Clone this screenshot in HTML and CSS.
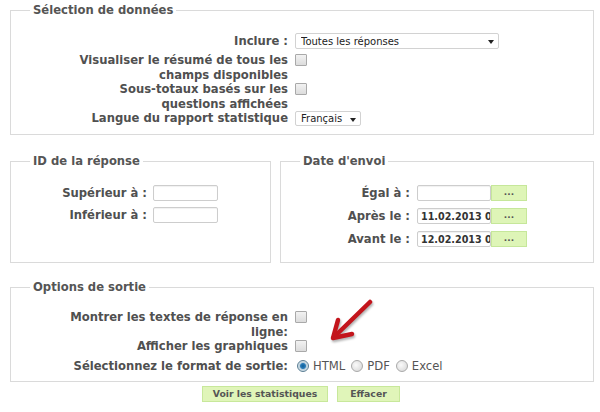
FILE: index.html
```html
<!DOCTYPE html>
<html lang="fr">
<head>
    <meta charset="UTF-8">
    <title>Statistiques</title>
    <link rel="stylesheet" href="styles.css">
</head>
<body>
    <div class="page">
        <fieldset class="box box-data">
            <legend>Sélection de données</legend>
            <div class="form-grid grid-data">
                <label class="lbl row-first">Inclure :</label>
                <div class="ctrl row-first">
                    <span class="select select-wide"><select><option>Toutes les réponses</option></select></span>
                </div>
                <label class="lbl">Visualiser le résumé de tous les champs disponibles</label>
                <div class="ctrl"><input type="checkbox" class="check"></div>
                <label class="lbl">Sous-totaux basés sur les questions affichées</label>
                <div class="ctrl"><input type="checkbox" class="check"></div>
                <label class="lbl">Langue du rapport statistique</label>
                <div class="ctrl">
                    <span class="select select-small"><select><option>Français</option></select></span>
                </div>
            </div>
        </fieldset>

        <div class="filters">
            <fieldset class="box box-id">
                <legend>ID de la réponse</legend>
                <div class="form-grid grid-id">
                    <label class="lbl">Supérieur à :</label>
                    <div class="ctrl"><input type="text" class="field field-id"></div>
                    <label class="lbl">Inférieur à :</label>
                    <div class="ctrl"><input type="text" class="field field-id"></div>
                </div>
            </fieldset>
            <fieldset class="box box-date">
                <legend>Date d'envoi</legend>
                <div class="form-grid grid-date">
                    <label class="lbl">Égal à :</label>
                    <div class="ctrl"><input type="text" class="field field-date"><button type="button" class="pick">...</button></div>
                    <label class="lbl">Après le :</label>
                    <div class="ctrl"><input type="text" class="field field-date" value="11.02.2013 00:00"><button type="button" class="pick">...</button></div>
                    <label class="lbl">Avant le :</label>
                    <div class="ctrl"><input type="text" class="field field-date" value="12.02.2013 00:00"><button type="button" class="pick">...</button></div>
                </div>
            </fieldset>
        </div>

        <fieldset class="box box-output">
            <legend>Options de sortie</legend>
            <div class="form-grid grid-data">
                <label class="lbl">Montrer les textes de réponse en ligne:</label>
                <div class="ctrl"><input type="checkbox" class="check"></div>
                <label class="lbl">Afficher les graphiques</label>
                <div class="ctrl"><input type="checkbox" class="check"></div>
                <label class="lbl row-format">Sélectionnez le format de sortie:</label>
                <div class="ctrl row-format formats">
                    <label class="opt"><input type="radio" name="fmt" class="radio" checked> HTML</label>
                    <label class="opt"><input type="radio" name="fmt" class="radio"> PDF</label>
                    <label class="opt"><input type="radio" name="fmt" class="radio"> Excel</label>
                </div>
            </div>
        </fieldset>

        <div class="actions">
            <button type="button" class="btn btn-show">Voir les statistiques</button>
            <button type="button" class="btn btn-clear">Effacer</button>
        </div>

        <!-- fleche rouge -->
        <svg class="arrow" width="56" height="52" viewBox="0 0 56 52">
            <path d="M46 5 L10 40" />
            <path d="M14 23 L9 41 L28 37" />
        </svg>
    </div>
</body>
</html>
```

FILE: styles.css
```css
* {
    box-sizing: border-box;
}
body {
    margin: 0;
    background-color: white;
    font-family: "DejaVu Sans", Verdana, sans-serif;
    color: #4d4d4d;
}
.page {
    position: relative;
    width: 600px;
    padding: 3px 6px 0 10px;
}
.box {
    margin: 0;
    padding: 0 0 8px 0;
    border: 1px solid #dadada;
    min-width: 0;
}
legend {
    margin-left: 19px;
    padding: 0 3px;
    font-size: 11.6px;
    line-height: 14px;
    font-weight: bold;
    color: #555;
}
.form-grid {
    display: grid;
    align-items: start;
}
.lbl {
    text-align: right;
    font-size: 11.6px;
    line-height: 14.5px;
    font-weight: bold;
    color: #505050;
}
.ctrl {
    display: flex;
    align-items: center;
}

/* selection de donnees */
.grid-data {
    grid-template-columns: 226px 1fr;
    column-gap: 7px;
    padding: 16px 0 0 51px;
}
.row-first {
    margin-bottom: 4px;
}
.box-data .lbl.row-first {
    line-height: 16px;
}
.select {
    position: relative;
    display: inline-block;
}
.select select {
    appearance: none;
    -webkit-appearance: none;
    display: block;
    height: 16px;
    padding: 0 0 0 5px;
    border: 1px solid #d2d2d2;
    border-radius: 2px;
    background: white;
    font-family: "DejaVu Sans", Verdana, sans-serif;
    font-size: 10px;
    color: #222;
}
.select::after {
    content: "";
    position: absolute;
    right: 5px;
    top: 7px;
    border-left: 3px solid transparent;
    border-right: 3px solid transparent;
    border-top: 4px solid #222;
}
.select-wide select {
    width: 204px;
}
.select-small select {
    width: 66px;
    height: 15px;
}
.check {
    appearance: none;
    -webkit-appearance: none;
    margin: 1px 0 0 0;
    width: 12px;
    height: 12px;
    border: 1px solid #a9a9a9;
    border-radius: 1px;
    background: linear-gradient(#f2f2f2, #dcdcdc);
}

/* filtres */
.filters {
    display: flex;
    gap: 9px;
    margin-top: 19px;
}
.box-id {
    flex: 0 0 261px;
}
.box-date {
    flex: 1;
}
.box-id, .box-date {
    padding-bottom: 15px;
}
.grid-id {
    grid-template-columns: 136px auto;
    column-gap: 6px;
    row-gap: 6px;
    padding-top: 17px;
}
.grid-date {
    grid-template-columns: 129px auto;
    column-gap: 7px;
    row-gap: 7px;
    padding-top: 17px;
}
.grid-id .lbl, .grid-date .lbl {
    line-height: 16px;
}
.field {
    height: 16px;
    padding: 0 0 0 3px;
    border: 1px solid #cdcdcd;
    border-radius: 2px;
    box-shadow: inset 0 1px 1px rgba(0, 0, 0, 0.06);
    font-family: "DejaVu Sans", Verdana, sans-serif;
    font-size: 9.6px;
    font-weight: bold;
    color: #333;
    background: white;
}
.field-id {
    width: 65px;
}
.field-date {
    width: 74px;
}
.pick {
    width: 36px;
    height: 16px;
    padding: 0 0 3px 0;
    border: 1px solid #c6e79a;
    background-color: #def5b7;
    font-family: "DejaVu Sans", Verdana, sans-serif;
    font-size: 9px;
    font-weight: bold;
    color: #555;
    line-height: 10px;
}

/* options de sortie */
.box-output {
    position: relative;
    margin-top: 17px;
}
.box-output .grid-data {
    padding-top: 16px;
}
.row-format {
    margin-top: 5px;
}
.formats {
    gap: 6px;
    padding-left: 2px;
}
.opt {
    display: flex;
    align-items: center;
    gap: 4px;
    font-size: 11.6px;
    line-height: 14.5px;
    color: #555;
}
.radio {
    appearance: none;
    -webkit-appearance: none;
    margin: 0;
    width: 12px;
    height: 12px;
    border: 1px solid #a9a9a9;
    border-radius: 50%;
    background: radial-gradient(circle at 40% 40%, #fafafa, #d4d4d4);
}
.radio:checked {
    border-color: #5a7d93;
    background: radial-gradient(circle, #0d5e98 0, #2b7cb8 2.5px, #b9cfdc 3.5px, #e6eef2 6px);
}

.actions {
    display: flex;
    justify-content: center;
    gap: 9px;
    margin-top: 4px;
    padding-right: 2px;
}
.btn {
    height: 16px;
    padding: 0;
    border: 1px solid #c8e89b;
    background-color: #e0f5b9;
    font-family: "DejaVu Sans", Verdana, sans-serif;
    font-size: 9.3px;
    font-weight: bold;
    color: #555;
    line-height: 14px;
}
.btn-show {
    width: 126px;
}
.btn-clear {
    width: 63px;
}

.arrow {
    position: absolute;
    left: 324px;
    top: 297px;
    fill: none;
    stroke: #c3151c;
    stroke-width: 4.5;
    stroke-linecap: round;
    stroke-linejoin: round;
    filter: drop-shadow(1px 2px 1px rgba(0, 0, 0, 0.3));
}
```
